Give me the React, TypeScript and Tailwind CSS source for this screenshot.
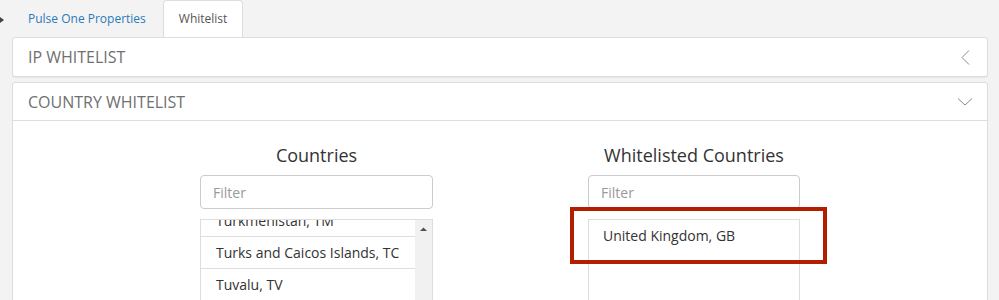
import React from "react";

const countries = ["Turkmenistan, TM", "Turks and Caicos Islands, TC", "Tuvalu, TV", "Uganda, UG"];

export default function App() {
  return (
    <div className="relative w-[999px] h-[300px] overflow-hidden bg-[#f3f3f3] font-['Open_Sans',sans-serif]">
      {/* tab bar */}
      <div className="flex h-[37px] items-stretch">
        <div className="flex w-[13px] items-center">
          <svg width="5" height="6" viewBox="0 0 5 6" className="mt-[2px]">
            <path d="M0 0 L4 3 L0 6 Z" fill="#444" />
          </svg>
        </div>
        <div className="flex items-center px-[15px] text-[12px] text-[#2a7ab9] mr-[2px]">Pulse One Properties</div>
        <div className="flex items-center px-[15px] text-[12px] text-[#555] bg-white border border-b-0 border-[#ddd] rounded-t-[4px]">
          Whitelist
        </div>
      </div>

      <div className="pl-[12px] pr-[11px]">
        {/* IP whitelist panel */}
        <div className="flex h-[40px] items-center justify-between rounded-[3px] border border-[#ddd] bg-white pl-[15px] pr-[14px] shadow-[0_1px_1px_rgba(0,0,0,0.05)]">
          <span className="text-[16px] text-[#707070]">IP WHITELIST</span>
          <svg width="20" height="20" viewBox="0 0 20 20">
            <path d="M16 3.5 L9 10.5 L16 17.5" fill="none" stroke="#8a8a8a" strokeWidth="1" />
          </svg>
        </div>

        {/* Country whitelist panel */}
        <div className="mt-[5px] h-[260px] rounded-[3px] border border-[#ddd] bg-white">
          <div className="flex h-[38px] items-center justify-between border-b border-[#ddd] pl-[15px] pr-[14px]">
            <span className="text-[16px] text-[#707070]">COUNTRY WHITELIST</span>
            <svg width="20" height="20" viewBox="0 0 20 20">
              <path d="M5 6.5 L12 13 L19 6.5" fill="none" stroke="#8a8a8a" strokeWidth="1" />
            </svg>
          </div>

          <div className="flex pt-[22px]">
            {/* Countries column */}
            <div className="ml-[187px] w-[233px]">
              <div className="text-center text-[18px] leading-[25px] text-[#333]">Countries</div>
              <div className="mt-[7px] flex h-[34px] items-center rounded-[4px] border border-[#ccc] px-[12px] text-[14px] text-[#999]">
                Filter
              </div>
              <div className="mt-[10px] flex h-[120px] border border-[#ddd]">
                <div className="flex-1 overflow-hidden">
                  <div className="-mt-[15px]">
                    {countries.map((c) => (
                      <div key={c} className="flex h-[32px] items-center border-b border-[#ddd] px-[15px] text-[14px] text-[#333]">
                        {c}
                      </div>
                    ))}
                  </div>
                </div>
                <div className="w-[17px] bg-[#f1f1f1]">
                  <svg width="17" height="17" viewBox="0 0 17 17">
                    <path d="M5 11 L8.5 7.5 L12 11 Z" fill="#505050" />
                  </svg>
                </div>
              </div>
            </div>

            {/* Whitelisted column */}
            <div className="ml-[155px] w-[212px]">
              <div className="text-center text-[18px] leading-[25px] text-[#333]">Whitelisted Countries</div>
              <div className="mt-[7px] flex h-[34px] items-center rounded-[4px] border border-[#ccc] px-[12px] text-[14px] text-[#999]">
                Filter
              </div>
              <div className="mt-[10px] h-[120px] border border-[#ddd]">
                <div className="flex h-[31px] items-center px-[14px] text-[14px] text-[#333]">United Kingdom, GB</div>
              </div>
            </div>
          </div>
        </div>
      </div>

      {/* red annotation box */}
      <div className="absolute left-[570px] top-[207px] h-[57px] w-[257px] border-[4px] border-[#b21f00]" />
    </div>
  );
}
